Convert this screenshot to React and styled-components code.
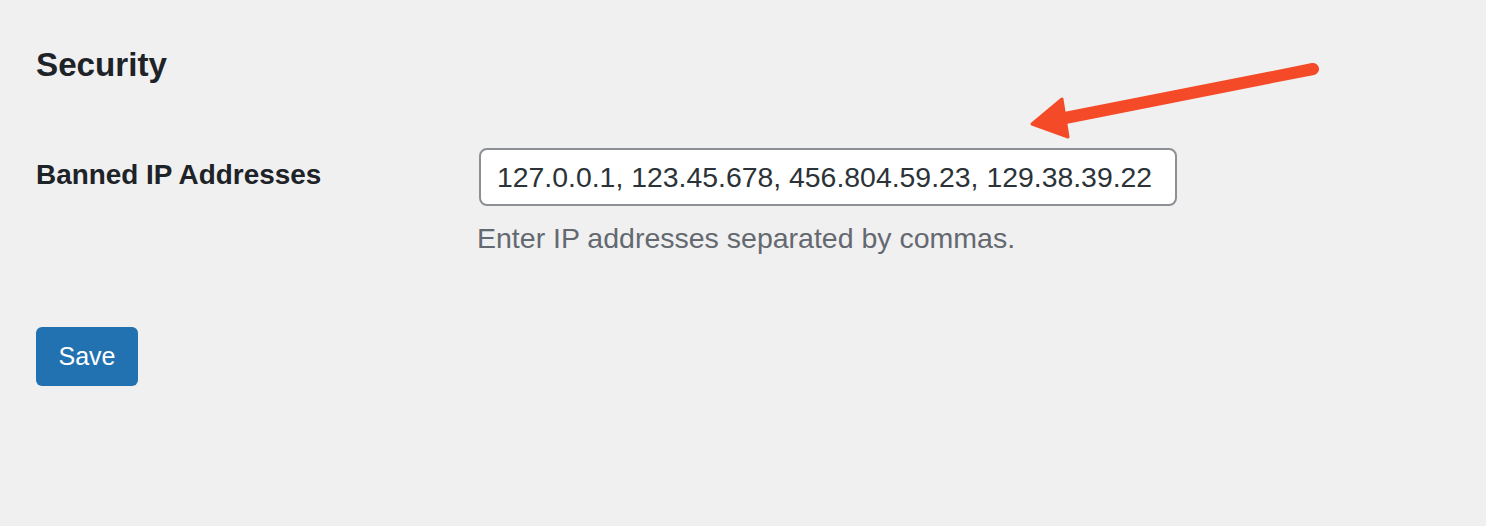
import React from 'react';
import styled, { createGlobalStyle } from 'styled-components';

const GlobalStyle = createGlobalStyle`
  html, body {
    margin: 0;
    padding: 0;
    background: #f0f0f1;
  }
  body {
    font-family: "Liberation Sans", Arial, sans-serif;
    color: #1d2327;
  }
`;

const Page = styled.div`
  position: relative;
  min-height: 526px;
  box-sizing: border-box;
  padding: 45px 36px;
`;

const Title = styled.h2`
  margin: 0;
  font-size: 33.2px;
  line-height: 40px;
  font-weight: 700;
  color: #1d2327;
`;

const FormTable = styled.div`
  display: grid;
  grid-template-columns: 443px 1fr;
  margin-top: 63px;
`;

const Label = styled.label`
  padding-top: 10px;
  font-size: 27.9px;
  line-height: 34px;
  font-weight: 700;
  color: #1d2327;
`;

const Field = styled.div`
  display: flex;
  flex-direction: column;
  align-items: flex-start;
`;

const Input = styled.input`
  box-sizing: border-box;
  width: 698px;
  height: 58px;
  padding: 0 16px;
  border: 2px solid #8c8f94;
  border-radius: 8px;
  background: #fff;
  font-family: "Liberation Sans", Arial, sans-serif;
  font-size: 28.4px;
  color: #2c3338;
  outline: none;
`;

const Description = styled.p`
  margin: 15px 0 0 -2px;
  font-size: 28.5px;
  line-height: 34px;
  color: #646970;
`;

const SaveButton = styled.button`
  margin-top: 72px;
  height: 59px;
  padding: 0 22.5px;
  border: none;
  border-radius: 6px;
  background: #2271b1;
  color: #fff;
  font-family: "Liberation Sans", Arial, sans-serif;
  font-size: 25px;
  cursor: pointer;
`;

const Arrow = styled.svg`
  position: absolute;
  left: 1020px;
  top: 55px;
  overflow: visible;
`;

const ips = '127.0.0.1, 123.45.678, 456.804.59.23, 129.38.39.22';

export default function App() {
  return (
    <>
      <GlobalStyle />
      <Page>
        <Title>Security</Title>
        <FormTable>
          <Label htmlFor="banned-ips">Banned IP Addresses</Label>
          <Field>
            <Input id="banned-ips" type="text" defaultValue={ips} />
            <Description>Enter IP addresses separated by commas.</Description>
          </Field>
        </FormTable>
        <SaveButton>Save</SaveButton>
        <Arrow width="310" height="95" viewBox="0 0 310 95">
          <line x1="293" y1="14" x2="45" y2="63" stroke="#f44a27" strokeWidth="12" strokeLinecap="round" />
          <polygon points="12,69 42,44 48,82" fill="#f44a27" stroke="#f44a27" strokeWidth="3" strokeLinejoin="round" />
        </Arrow>
      </Page>
    </>
  );
}
